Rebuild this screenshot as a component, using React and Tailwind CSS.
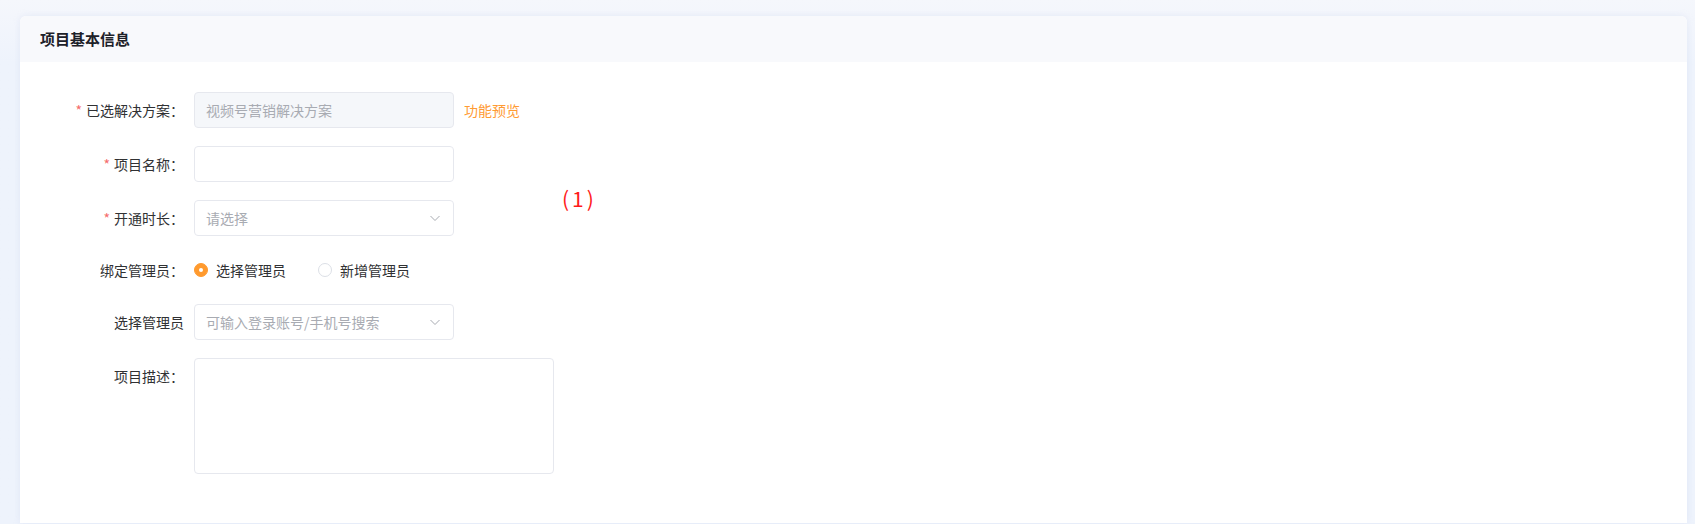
import React, { useState } from 'react'

const font = { fontFamily: '"Noto Sans CJK SC", "Noto Sans", sans-serif' }

function Label({ text, required, colon = true }) {
  return (
    <div className="w-[174px] shrink-0 pr-[10px] h-9 flex items-center justify-end text-[14px] text-[#303133]">
      {required && <span className="text-[#f56c6c] mr-[4px]">*</span>}
      <span>{text}{colon ? '：' : ''}</span>
    </div>
  )
}

function Chevron() {
  return (
    <svg width="12" height="12" viewBox="0 0 12 12" fill="none" className="text-[#a8abb2]">
      <path d="M1.5 4 L6 8.5 L10.5 4" stroke="currentColor" strokeWidth="1" />
    </svg>
  )
}

function Radio({ checked, label, onClick }) {
  return (
    <button onClick={onClick} className="flex items-center mr-[32px] text-[14px] text-[#303133]">
      <span
        className={`w-[14px] h-[14px] rounded-full flex items-center justify-center ${
          checked ? 'bg-[#ff9a2e] border border-[#ff9a2e]' : 'bg-white border border-[#dcdfe6]'
        }`}
      >
        {checked && <span className="w-[4px] h-[4px] rounded-full bg-white" />}
      </span>
      <span className="ml-[8px]">{label}</span>
    </button>
  )
}

export default function App() {
  const [admin, setAdmin] = useState('select')

  return (
    <div className="w-[1695px] h-[524px] bg-gradient-to-b from-[#f5f7fc] to-[#eef3fc] to-[12%] pt-4 pl-5 pr-2" style={font}>
      <div className="relative h-[507px] bg-white rounded-t-[6px] shadow-[0_0_6px_rgba(200,210,235,0.35)] overflow-hidden">
        <div className="h-[46px] bg-[#f8f9fc] flex items-center pl-5">
          <h1 className="text-[15px] font-bold text-[#1d2129]">项目基本信息</h1>
        </div>

        <div className="pt-[30px] flex flex-col gap-[18px]">
          <div className="flex items-center">
            <Label text="已选解决方案" required />
            <div className="w-[260px] h-9 rounded-[4px] border border-[#e6e8ee] bg-[#f5f7fa] px-[11px] flex items-center text-[14px] text-[#a8abb2]">
              视频号营销解决方案
            </div>
            <a className="ml-[10px] text-[14px] text-[#ff9b33] cursor-pointer">功能预览</a>
          </div>

          <div className="flex items-center">
            <Label text="项目名称" required />
            <input className="w-[260px] h-9 rounded-[4px] border border-[#e6e8ee] bg-white px-[11px] text-[14px] outline-none" />
          </div>

          <div className="flex items-center">
            <Label text="开通时长" required />
            <div className="w-[260px] h-9 rounded-[4px] border border-[#e6e8ee] bg-white pl-[11px] pr-[12px] flex items-center justify-between text-[14px] text-[#a8abb2]">
              <span>请选择</span>
              <Chevron />
            </div>
          </div>

          <div className="flex items-center h-8">
            <Label text="绑定管理员" />
            <Radio checked={admin === 'select'} label="选择管理员" onClick={() => setAdmin('select')} />
            <Radio checked={admin === 'new'} label="新增管理员" onClick={() => setAdmin('new')} />
          </div>

          <div className="flex items-center">
            <Label text="选择管理员" colon={false} />
            <div className="w-[260px] h-9 rounded-[4px] border border-[#e6e8ee] bg-white pl-[11px] pr-[12px] flex items-center justify-between text-[14px] text-[#a8abb2]">
              <span>可输入登录账号/手机号搜索</span>
              <Chevron />
            </div>
          </div>

          <div className="flex items-start">
            <Label text="项目描述" />
            <textarea className="w-[360px] h-[116px] rounded-[4px] border border-[#e6e8ee] bg-white px-[11px] py-[6px] text-[14px] outline-none resize-none" />
          </div>
        </div>

        <span className="absolute left-[542px] top-[169px] text-[21px] leading-[26px] text-[#ff1a1a] tracking-[3px]">(1)</span>
      </div>
    </div>
  )
}
